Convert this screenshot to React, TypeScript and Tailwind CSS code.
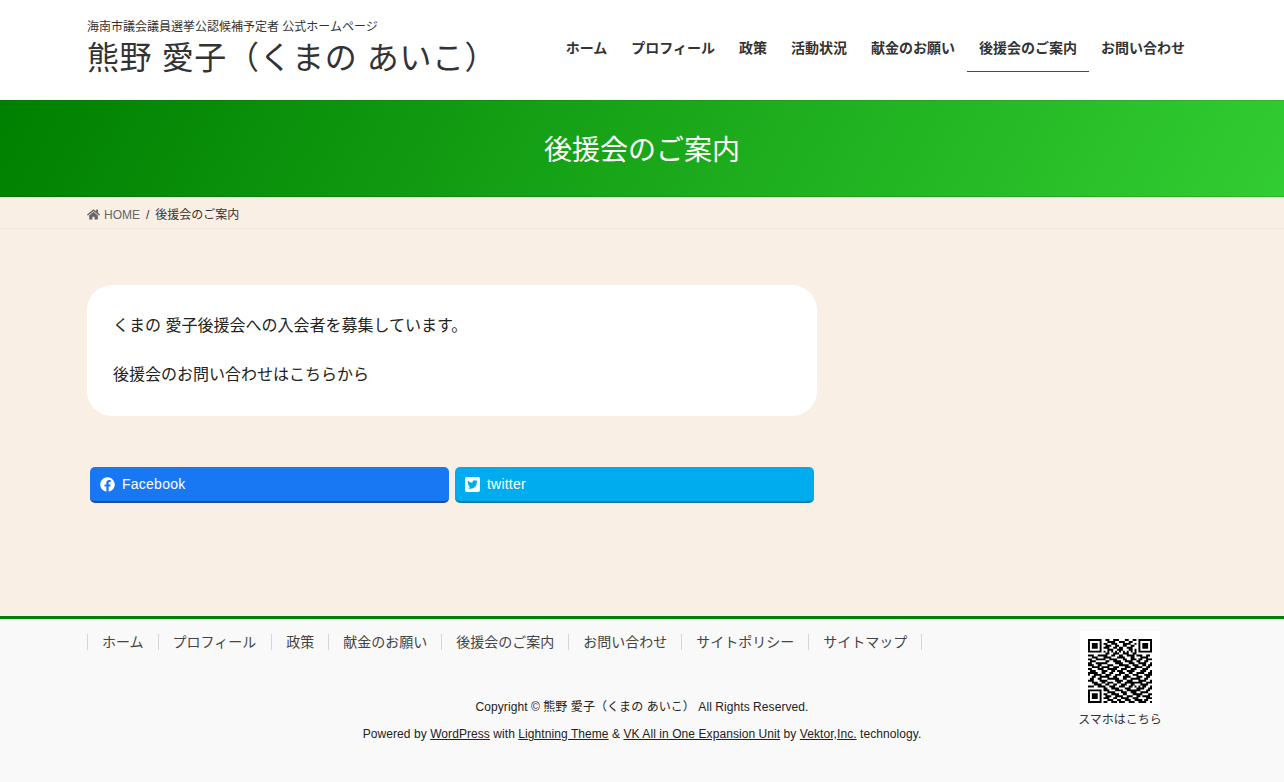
import { FaFacebook, FaHome, FaTwitterSquare } from "react-icons/fa"

const jp = "font-['Liberation_Sans','Noto_Sans_CJK_JP',sans-serif]"

const navItems = ["ホーム", "プロフィール", "政策", "活動状況", "献金のお願い", "後援会のご案内", "お問い合わせ"]
const footerItems = ["ホーム", "プロフィール", "政策", "献金のお願い", "後援会のご案内", "お問い合わせ", "サイトポリシー", "サイトマップ"]

// 33x33 modules, data area is only roughly the same as the picture
const qrRows = [
  "111111100110011100011001101111111",
  "100000100011110011100110001000001",
  "101110101100111000111100101011101",
  "101110100111001100110011001011101",
  "101110101110011011001110001011101",
  "100000100011100111000110101000001",
  "111111101010101010101010101111111",
  "000000000110011100111001100000000",
  "111001111100110011001111011100110",
  "001110001111000111100011000111100",
  "110011111001111000110011101100111",
  "011100000110011110011110011001100",
  "110011111100001111000111001111001",
  "111001100011100011111001110011011",
  "001111011110011100011100111100110",
  "110001110011111001110011100011100",
  "011100011100110111001111000111001",
  "111110011001100011100110011110011",
  "100111100111001110011001110001111",
  "001100111110011000111100011100110",
  "011001100011111100110011111001100",
  "111000111100001111001110001111001",
  "001110011011100110011111111100111",
  "000111100110011001110011000111100",
  "111001111001110011100110101011001",
  "000000001100111100011100011110011",
  "111111101110001111001111111000110",
  "100000100011110001110011100111100",
  "101110101100111100110001111100011",
  "101110100111001111001110011011110",
  "101110101110011001111001110000111",
  "100000100011100110011100111101100",
  "111111101100111011100111001111001",
]

const qrPath = qrRows
  .map((row, y) =>
    row
      .split("")
      .map((c, x) => (c === "1" ? `M${x} ${y}h1v1h-1z` : ""))
      .join("")
  )
  .join("")

function QrCode() {
  return (
    <svg width="64" height="64" viewBox="0 0 33 33">
      <path d={qrPath} fill="#000" />
    </svg>
  )
}

export default function App() {
  return (
    <div className={`${jp} min-h-[782px] flex flex-col bg-[#f9efe5] text-[#333]`}>
      <header className="h-[100px] bg-white flex items-start justify-between pl-[87px] pr-[87px]">
        <div className="pt-[19px]">
          <p className="text-[12px] leading-[17px] text-[#333]">海南市議会議員選挙公認候補予定者 公式ホームページ</p>
          <h1 className="mt-[2px] text-[32px] leading-[40px] font-normal tracking-[0.6px] text-[#333] whitespace-nowrap">熊野 愛子（くまの あいこ）</h1>
        </div>
        <nav className="flex">
          {navItems.map((item) => (
            <a
              key={item}
              className={`h-[72px] px-3 pt-[38px] text-[14px] leading-[20px] font-bold whitespace-nowrap text-[#333] ${
                item === "後援会のご案内" ? "border-b border-[#008000]" : ""
              }`}
            >
              {item}
            </a>
          ))}
        </nav>
      </header>

      <div className="h-[97px] flex items-center justify-center border-y border-black/10 bg-[linear-gradient(120deg,#008000,#32cd32)]">
        <h2 className="text-[28px] font-normal leading-[40px] text-white translate-y-[2px]">後援会のご案内</h2>
      </div>

      <div className="h-[32px] border-b border-[#f0e6dc] pl-[87px] pt-[4px] flex items-center text-[12px]">
        <FaHome className="w-[13px] h-[13px] mr-[4px] text-[#666]" />
        <span className="text-[#666]">HOME</span>
        <span className="mx-[6px] text-[#333]">/</span>
        <span className="text-[#333]">後援会のご案内</span>
      </div>

      <main className="h-[387px] pl-[87px] pt-[56px]">
        <div className="w-[730px] h-[131px] bg-white rounded-[25px] px-[26px] pt-[26px] text-[16px] leading-[29px] text-[#222]">
          <p className="mb-[20px]">くまの 愛子後援会への入会者を募集しています。</p>
          <p>後援会のお問い合わせはこちらから</p>
        </div>
        <div className="mt-[51px] ml-[3px] flex gap-[6px]">
          <a className="w-[359px] h-[36px] rounded-[5px] bg-[#1877f2] border-b-2 border-[#1d4e9e] flex items-center pl-[10px] text-white text-[14px] tracking-[0.25px]">
            <FaFacebook className="w-[15px] h-[15px] mr-[7px]" />
            Facebook
          </a>
          <a className="w-[359px] h-[36px] rounded-[5px] bg-[#00acee] border-b-2 border-[#0a7fae] flex items-center pl-[9px] text-white text-[14px] tracking-[0.2px]">
            <FaTwitterSquare className="w-[17px] h-[17px] mr-[6px]" />
            twitter
          </a>
        </div>
      </main>

      <footer className="flex-1 border-t-[3px] border-[#008000] bg-[#f9f9f9] flex justify-between pl-[87px] pr-[122px]">
        <div className="w-[834px]">
          <ul className="flex mt-[15px] border-l border-[#d5d5d5] w-fit">
            {footerItems.map((item) => (
              <li
                key={item}
                className={`h-[16px] pl-[14px] border-r border-[#d5d5d5] flex items-center text-[14px] text-[#444] whitespace-nowrap ${
                  item === "プロフィール" ? "pr-[15px]" : "pr-[14px]"
                }`}
              >
                {item}
              </li>
            ))}
          </ul>
          <div className="w-[1110px] mt-[49px] text-center text-[12px] tracking-[0.07px] text-[#222]">
            <p className="leading-[17px]">Copyright © 熊野 愛子（くまの あいこ） All Rights Reserved.</p>
            <p className="leading-[17px] mt-[10px]">
              Powered by <u>WordPress</u> with <u>Lightning Theme</u> &amp; <u>VK All in One Expansion Unit</u> by <u>Vektor,Inc.</u> technology.
            </p>
          </div>
        </div>
        <div className="mt-[12px] w-[84px] flex flex-col items-center">
          <div className="w-[80px] h-[80px] bg-white flex items-center justify-center">
            <QrCode />
          </div>
          <p className="text-[12px] leading-[17px] text-[#333] whitespace-nowrap mt-[1px]">スマホはこちら</p>
        </div>
      </footer>
    </div>
  )
}
